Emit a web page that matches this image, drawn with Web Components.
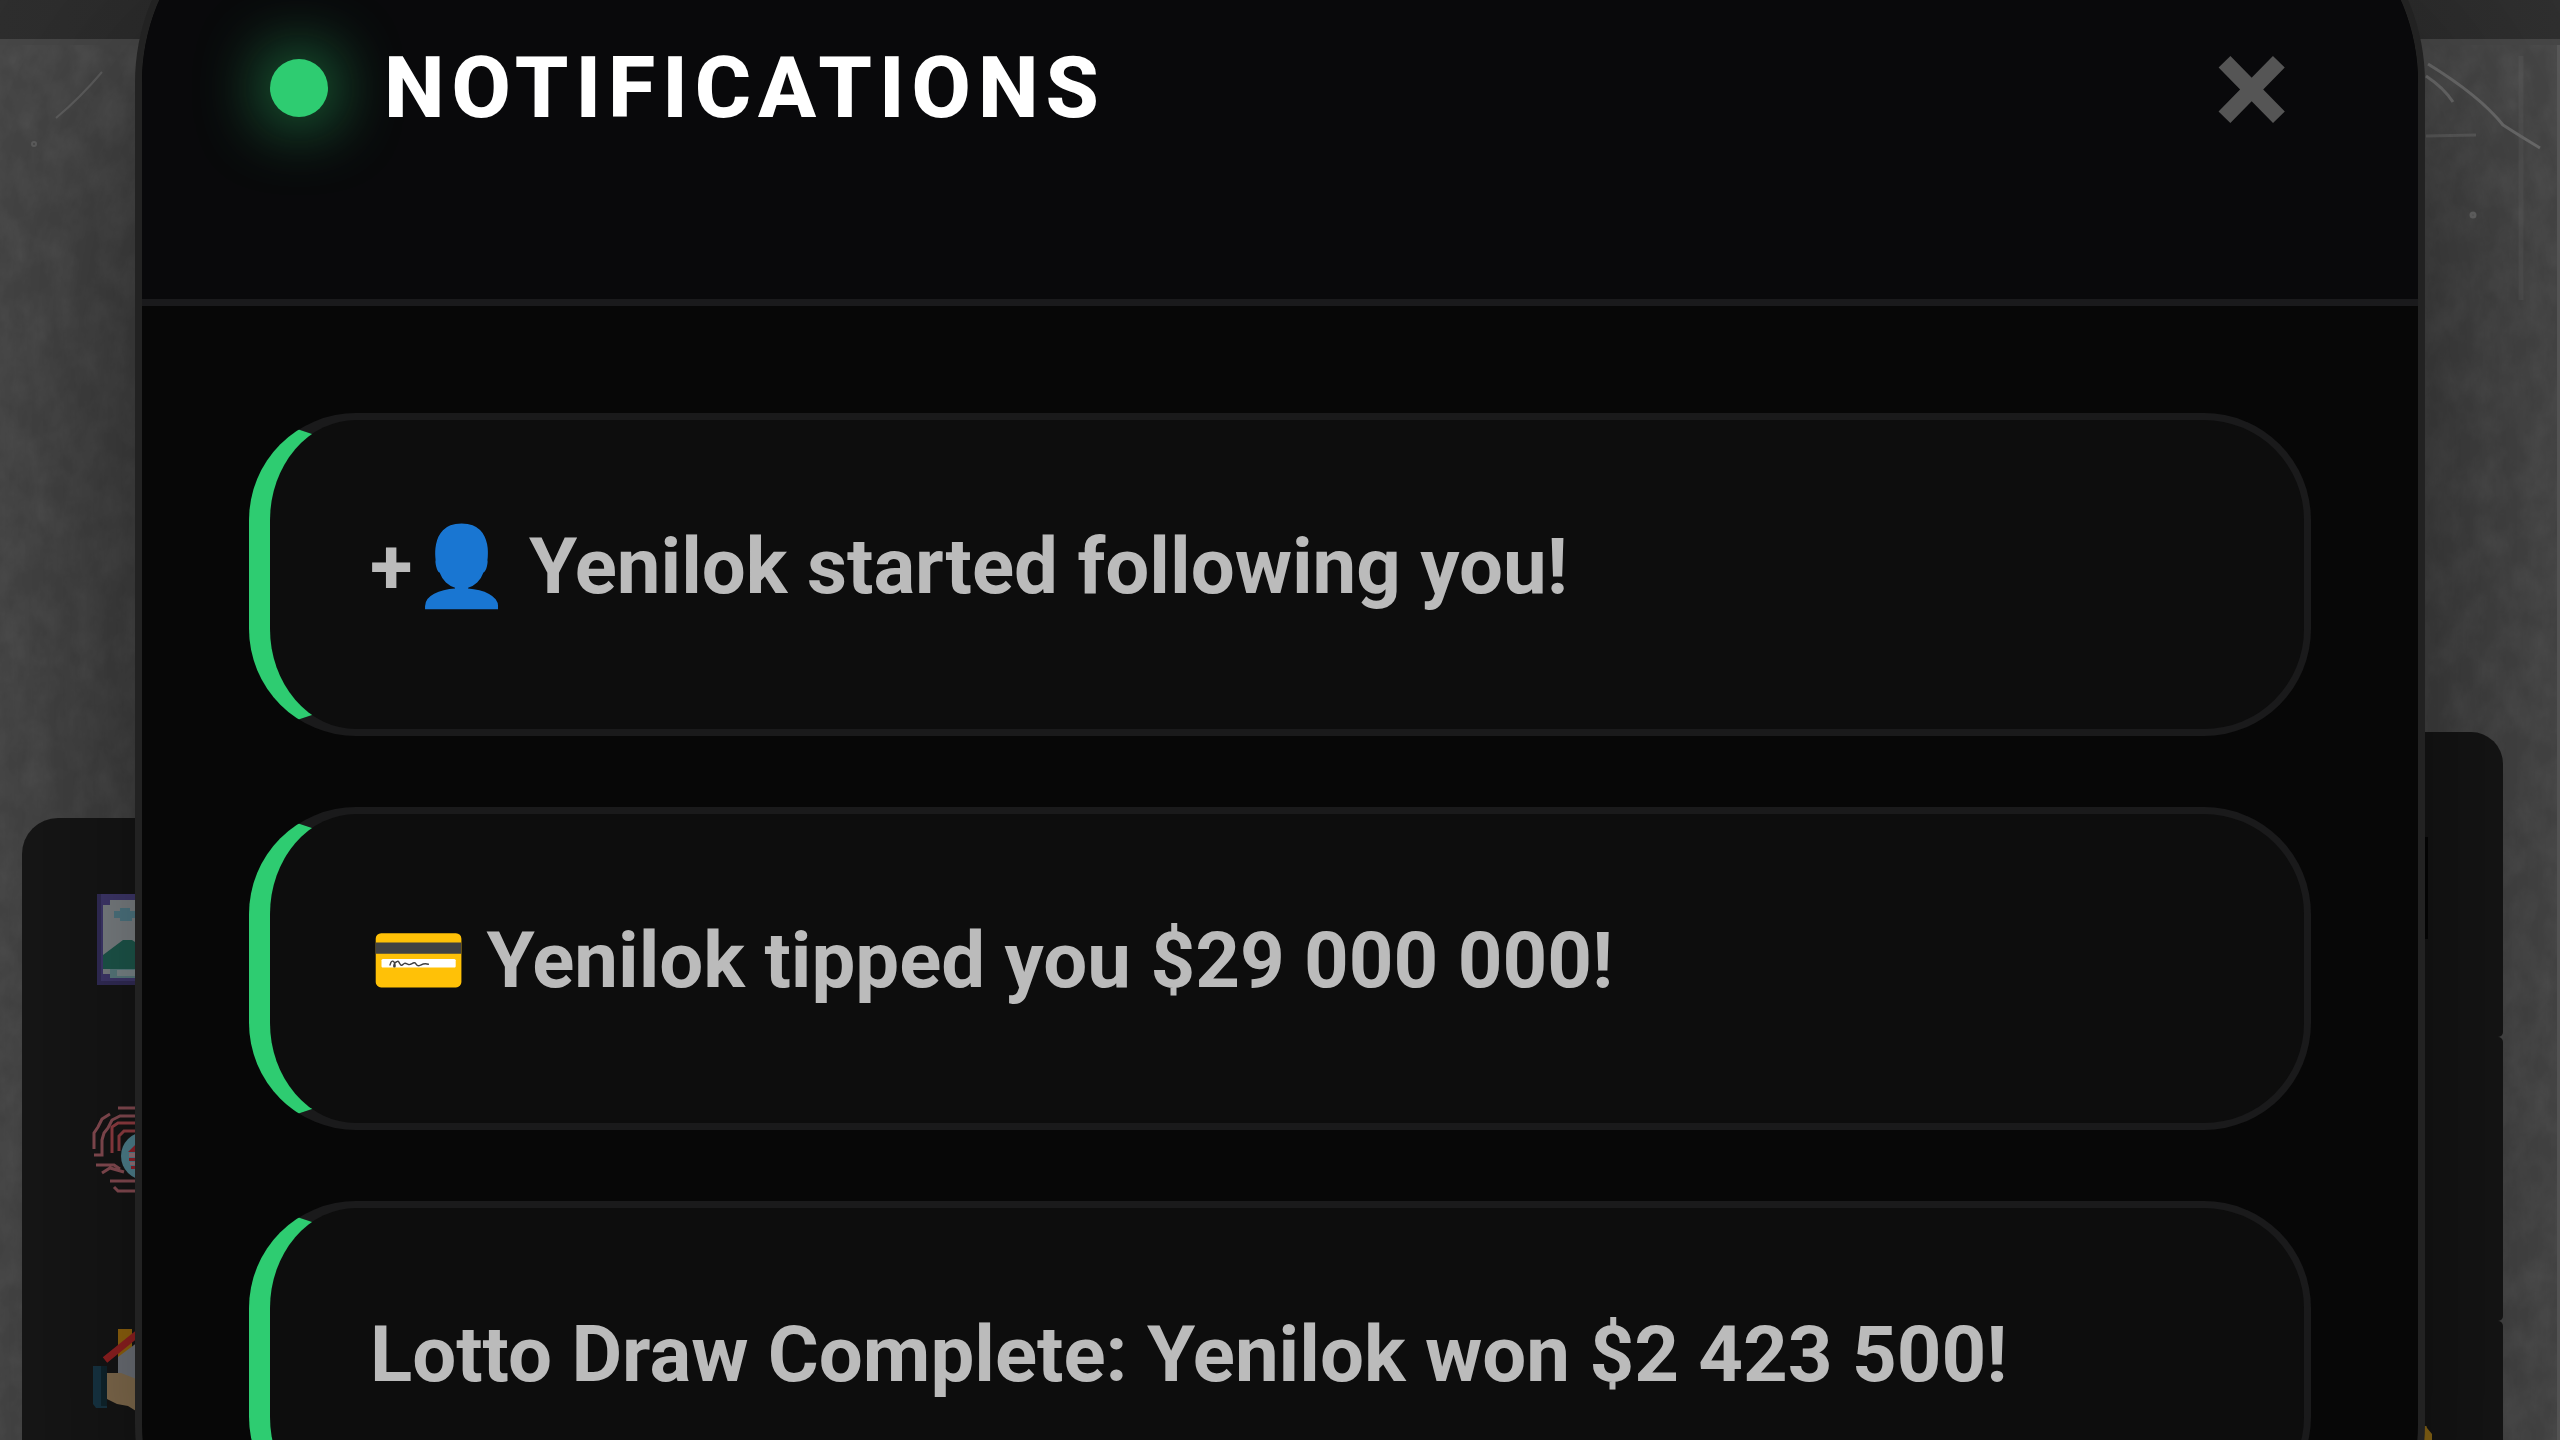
<!DOCTYPE html>
<html lang="en">
<head>
<meta charset="UTF-8">
<meta name="viewport" content="width=device-width, initial-scale=1.0">
<title>Notifications</title>
<style>
    * { box-sizing: border-box; }
    html, body { height: 100%; margin: 0; }
    body {
        overflow: hidden;
        background: #404040;
        font-family: Roboto, "Liberation Sans", sans-serif;
    }
</style>
</head>
<body>
<game-page>
    <asset-list slot="left">
        <asset-icon name="picture"></asset-icon>
        <asset-icon name="fingerprint"></asset-icon>
        <asset-icon name="house"></asset-icon>
    </asset-list>
    <stat-stack slot="right"></stat-stack>
</game-page>

<notification-dialog heading="NOTIFICATIONS">
    <notification-item>+👤 Yenilok started following you!</notification-item>
    <notification-item>💳 Yenilok tipped you $29 000 000!</notification-item>
    <notification-item>Lotto Draw Complete: Yenilok won $2 423 500!</notification-item>
</notification-dialog>

<script>
// --- Page behind the dialog ---
class GamePage extends HTMLElement {
    constructor() {
        super();
        this.attachShadow({ mode: 'open' });
    }

    connectedCallback() {
        this.shadowRoot.innerHTML = `
            <style>
                :host {
                    display: flex;
                    flex-direction: column;
                    height: 100vh;
                    background: #474747;
                    position: relative;
                }
                .texture {
                    position: absolute;
                    inset: 0;
                    width: 100%;
                    height: 100%;
                }
                header {
                    position: relative;
                    flex: none;
                    height: 39px;
                    background: linear-gradient(90deg, #2f2f2f, #2b2b2b 10%, #2b2b2b 90%, #303030);
                    border-bottom: 6px solid #484848;
                }
                main {
                    position: relative;
                    flex: 1;
                    display: grid;
                    grid-template-columns: 1fr 1fr;
                    padding: 0 54px 0 22px;
                    border-right: 3px solid #5a5a5a;
                    overflow: hidden;
                }
            </style>
            <svg class="texture" aria-hidden="true">
                <defs>
                    <filter id="grain" x="0" y="0" width="100%" height="100%">
                        <feTurbulence type="fractalNoise" baseFrequency="0.04 0.03" numOctaves="4" seed="4"/>
                        <feColorMatrix values="0 0 0 0 0.6  0 0 0 0 0.6  0 0 0 0 0.6  0.13 0 0 0 -0.04"/>
                    </filter>
                </defs>
                <rect width="100%" height="100%" filter="url(#grain)"/>
                <g fill="none" stroke="#7a7a7a" stroke-width="2" opacity="0.5">
                    <path d="M56 118 Q80 98 102 72"/>
                    <circle cx="34" cy="144" r="2"/>
                </g>
                <!-- scratches hang from the right edge, so they follow the window -->
                <svg x="100%" overflow="visible">
                    <g fill="none" stroke="#858585" stroke-width="3" opacity="0.6">
                        <path d="M-134 76 Q-116 88 -107 102"/>
                        <path d="M-132 64 Q-80 96 -57 125 Q-40 136 -20 148"/>
                        <path d="M-134 136 L-84 135" opacity="0.6"/>
                        <path d="M-39 56 V300" stroke-width="5" opacity="0.25"/>
                        <circle cx="-87" cy="215" r="2"/>
                    </g>
                </svg>
            </svg>
            <header></header>
            <main>
                <slot name="left"></slot>
                <slot name="right"></slot>
            </main>
        `;
    }
}

class AssetList extends HTMLElement {
    constructor() {
        super();
        this.attachShadow({ mode: 'open' });
    }

    connectedCallback() {
        this.shadowRoot.innerHTML = `
            <style>
                :host {
                    display: flex;
                    flex-direction: column;
                    margin-top: 773px;
                    padding: 13px 70px 0;
                    background: #181818;
                    border-radius: 36px 0 0 0;
                }
            </style>
            <slot></slot>
        `;
    }
}

const ICONS = {
    picture: `
        <path fill="#4a4280" d="M5 1h86v91H5z"/>
        <path fill="#3b3468" d="M5 1h4v91H5zM5 88h86v4H5z"/>
        <path fill="#93999d" d="M11 7h74v78H11z"/>
        <path fill="#4a4280" d="M9 5h9v7h-9zM9 81h9v7h-9z"/>
        <path fill="#5d8d9c" d="M22 18h6v-3h10v3h10v7h-8v3h-12v-3h-6z"/>
        <path fill="#22685a" d="M11 62l8-6 12-9h9l6 4 39 25H11z"/>
        <path fill="#6b9498" d="M18 76h67v9H18z"/>
        <path fill="#94a3a6" d="M25 77h20v6H25z"/>`,
    fingerprint: `
        <g fill="none" stroke="#a25a62" stroke-width="3">
            <path d="M70 0H26M18 6l-8 5-4 8-4 6v16M60 8H28l-8 4-4 8-4 5-2 7v15H2"/>
            <path d="M60 15H26l-6 4v26M60 23H32l-5 5v15" stroke="#b0494f"/>
            <path d="M4 57h18l6 4M10 65l8-5 14 4M18 73h26M22 79l4 4h40"/>
        </g>
        <circle cx="53" cy="48" r="24" fill="#5f9cac"/>
        <path fill="#ad2733" d="M45 35l-9 9h12zM37 50h12v3H37zM39 58h12v3H39z"/>
        <path fill="#b58a92" d="M37 45h10v4H37zM38 54h10v3H38z"/>`,
    house: `
        <path fill="#ac750f" d="M26 6h14v22l-14 8z"/>
        <path fill="#82868f" d="M26 34l24-18 30 24v16H26z"/>
        <path fill="none" stroke="#ad2526" stroke-width="7" d="M13 37L50 7l34 30"/>
        <path fill="#1b3d4f" d="M1 43h14v42H4l-3-4z"/>
        <path fill="#112a34" d="M9 43h6v40H9z"/>
        <path fill="#9a805c" d="M15 50h14l18 7h40v31H44l-8-5-11-2-10-5z"/>`
};

class AssetIcon extends HTMLElement {
    constructor() {
        super();
        this.attachShadow({ mode: 'open' });
    }

    connectedCallback() {
        this.shadowRoot.innerHTML = `
            <style>
                :host {
                    display: flex;
                    align-items: center;
                    height: 215px;
                    flex: none;
                }
                svg {
                    width: 92px;
                    height: 92px;
                    overflow: visible;
                    opacity: 0.95;
                }
            </style>
            <svg viewBox="0 0 92 92" aria-hidden="true">${ICONS[this.getAttribute('name')]}</svg>
        `;
    }
}

class StatStack extends HTMLElement {
    constructor() {
        super();
        this.attachShadow({ mode: 'open' });
    }

    connectedCallback() {
        this.shadowRoot.innerHTML = `
            <style>
                :host {
                    display: block;
                    margin-top: 687px;
                }
                .card {
                    box-sizing: border-box;
                    display: flex;
                    justify-content: flex-end;
                    height: 284px;
                    padding: 105px 75px 0 0;
                    background: #171717;
                    border-radius: 0 5px 5px 0;
                }
                .card.first {
                    height: 305px;
                    border-top-right-radius: 32px;
                }
                .field {
                    width: 400px;
                    height: 102px;
                    background: #050505;
                }
                svg {
                    width: 60px;
                    height: 60px;
                    margin-right: -4px;
                }
            </style>
            <div class="card first"><div class="field"></div></div>
            <div class="card"></div>
            <div class="card">
                <svg viewBox="0 0 60 60" aria-hidden="true">
                    <path fill="#9c7418" d="M52 -8l3 10 5 6v52H0V6z"/>
                </svg>
            </div>
        `;
    }
}

// --- Notifications ---
class NotificationDialog extends HTMLElement {
    constructor() {
        super();
        this.attachShadow({ mode: 'open' });
    }

    connectedCallback() {
        const heading = this.getAttribute('heading');

        this.shadowRoot.innerHTML = `
            <style>
                :host {
                    position: fixed;
                    inset: 0;
                    display: flex;
                    padding: 0 135px;
                }
                .panel {
                    flex: 1;
                    align-self: flex-start;
                    min-height: calc(100vh + 262px);
                    margin-top: -131px;
                    background: #070707;
                    border: 7px solid #222;
                    border-radius: 214px;
                    box-shadow: 0 143px 286px rgba(0, 0, 0, 0.55);
                    overflow: hidden;
                }
                header {
                    display: flex;
                    align-items: center;
                    gap: 56px;
                    padding: 128px 128px 127px;
                    background: #09090b;
                    border-bottom: 7px solid #1a1a1c;
                }
                .dot {
                    width: 58px;
                    height: 58px;
                    border-radius: 50%;
                    background: #2ecc71;
                    box-shadow: 0 0 71px #2ecc71;
                }
                h2 {
                    flex: 1;
                    margin: 0;
                    color: #fff;
                    font-size: 86px;
                    font-weight: 800;
                    line-height: 100px;
                    letter-spacing: 7px;
                }
                button {
                    padding: 0;
                    border: 0;
                    background: none;
                    color: #555;
                    font: 700 143px/168px Roboto, "Liberation Sans", sans-serif;
                    cursor: pointer;
                }
                .list {
                    display: flex;
                    flex-direction: column;
                    gap: 71px;
                    padding: 107px;
                }
            </style>
            <section class="panel" role="dialog" aria-labelledby="heading">
                <header>
                    <span class="dot"></span>
                    <h2 id="heading">${heading}</h2>
                    <button type="button" aria-label="Close">×</button>
                </header>
                <div class="list"><slot></slot></div>
            </section>
        `;

        this.shadowRoot.querySelector('button').addEventListener('click', () => this.remove());
    }
}

class NotificationItem extends HTMLElement {
    constructor() {
        super();
        this.attachShadow({ mode: 'open' });
    }

    connectedCallback() {
        this.shadowRoot.innerHTML = `
            <style>
                :host {
                    display: block;
                    padding: 101px 100px 116px;
                    background: #0d0d0d;
                    border: 7px solid #1a1a1b;
                    border-left: 21px solid #2ecc71;
                    border-radius: 107px;
                    color: #bbb;
                    font-size: 78px;
                    font-weight: 700;
                    line-height: 92px;
                }
            </style>
            <slot></slot>
        `;
    }
}

customElements.define('game-page', GamePage);
customElements.define('asset-list', AssetList);
customElements.define('asset-icon', AssetIcon);
customElements.define('stat-stack', StatStack);
customElements.define('notification-dialog', NotificationDialog);
customElements.define('notification-item', NotificationItem);
</script>
</body>
</html>
